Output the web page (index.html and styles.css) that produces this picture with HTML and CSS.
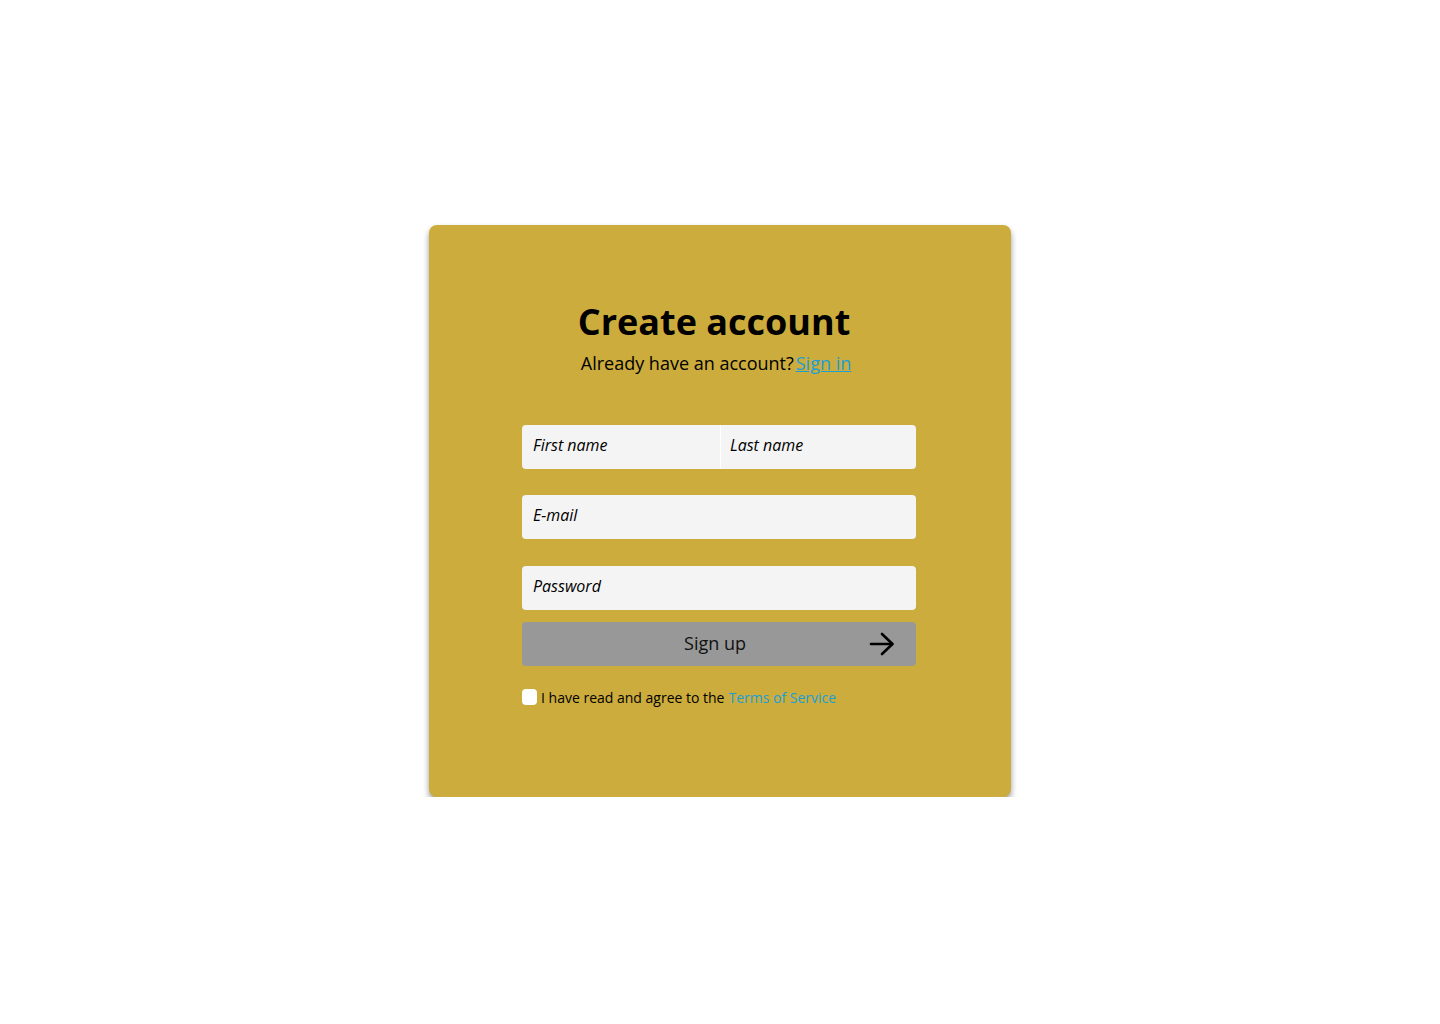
FILE: index.html
```html
<!DOCTYPE html>
<html lang="en">
<head>
    <meta charset="UTF-8">
    <meta name="viewport" content="width=device-width, initial-scale=1.0">
    <title>Create account</title>
    <link rel="stylesheet" href="styles.css">
</head>
<body>
    <div class="signup-card">
        <h1>Create account</h1>
        <p class="subtitle">Already have an account?<a href="#">Sign in</a></p>

        <form class="signup-form">
            <div class="name-row">
                <input type="text" class="field field-first" placeholder="First name">
                <input type="text" class="field field-last" placeholder="Last name">
            </div>
            <input type="email" class="field field-email" placeholder="E-mail">
            <input type="password" class="field field-password" placeholder="Password">

            <button type="button" class="signup-btn">
                <span>Sign up</span>
                <svg class="arrow" width="26" height="24" viewBox="0 0 26 24" fill="none" stroke="#000" stroke-width="2.6" stroke-linecap="round" stroke-linejoin="round">
                    <path d="M2 12 H23"/>
                    <path d="M13 2 L23.5 12 L13 22"/>
                </svg>
            </button>

            <label class="terms">
                <span class="checkbox"></span>
                I have read and agree to the <a href="#">Terms of Service</a>
            </label>
        </form>
    </div>
</body>
</html>
```

FILE: styles.css
```css
:root {
    --card-color: #ccac3c;
    --field-color: #f4f4f4;
    --button-color: #989898;
    --link-color: #1a9fd6;
}

body {
    margin: 0;
    font-family: 'Open Sans', 'Liberation Sans', sans-serif;
    background-color: #fff;
    color: #000;
}

.signup-card {
    width: 582px;
    height: 572px;
    box-sizing: border-box;
    margin: 225px auto 0;
    padding-top: 71px;
    background-color: var(--card-color);
    border-radius: 8px;
    box-shadow: 0 4px 6px rgba(0, 0, 0, 0.4);
    display: flex;
    flex-direction: column;
    align-items: center;
}

h1 {
    margin: 0;
    font-size: 36px;
    font-weight: 700;
    line-height: 52px;
    position: relative;
    left: -6px;
}

.subtitle {
    margin: 2px 0 0;
    font-size: 18px;
    line-height: 26px;
    position: relative;
    left: -4px;
}

.subtitle a {
    color: var(--link-color);
    margin-left: 2px;
}

.signup-form {
    width: 394px;
    margin-top: 49px;
    display: flex;
    flex-direction: column;
    position: relative;
    left: -1px;
}

.name-row {
    display: flex;
    gap: 1px;
    background: linear-gradient(#fff, #fff) no-repeat 198px 0 / 1px 100%;
}

.field {
    height: 44px;
    box-sizing: border-box;
    border: none;
    border-radius: 4px;
    background-color: var(--field-color);
    padding: 0 11px 4px;
    font-family: inherit;
    font-size: 16px;
    outline: none;
}

.field::placeholder {
    color: #000;
    font-style: italic;
    opacity: 1;
}

.field-first {
    width: 198px;
    border-radius: 4px 0 0 4px;
}

.field-last {
    flex: 1;
    min-width: 0;
    border-radius: 0 4px 4px 0;
    padding-left: 9px;
}

.field-email {
    margin-top: 26px;
}

.field-password {
    margin-top: 27px;
}

.signup-btn {
    margin-top: 12px;
    height: 44px;
    border: none;
    border-radius: 4px;
    background-color: var(--button-color);
    font-family: inherit;
    font-size: 18px;
    color: #111;
    position: relative;
    display: flex;
    align-items: center;
    justify-content: center;
    padding: 0;
}

.signup-btn span {
    position: relative;
    left: -4px;
    top: -1px;
}

.signup-btn .arrow {
    position: absolute;
    right: 21px;
    top: 10px;
}

.terms {
    margin-top: 24px;
    display: flex;
    align-items: center;
    font-size: 14px;
    line-height: 16px;
}

.checkbox {
    width: 15px;
    height: 16px;
    background-color: #fff;
    border-radius: 4px;
    margin-right: 4px;
    position: relative;
    top: -1px;
}

.terms a {
    color: var(--link-color);
    text-decoration: none;
    margin-left: 4px;
}
```
